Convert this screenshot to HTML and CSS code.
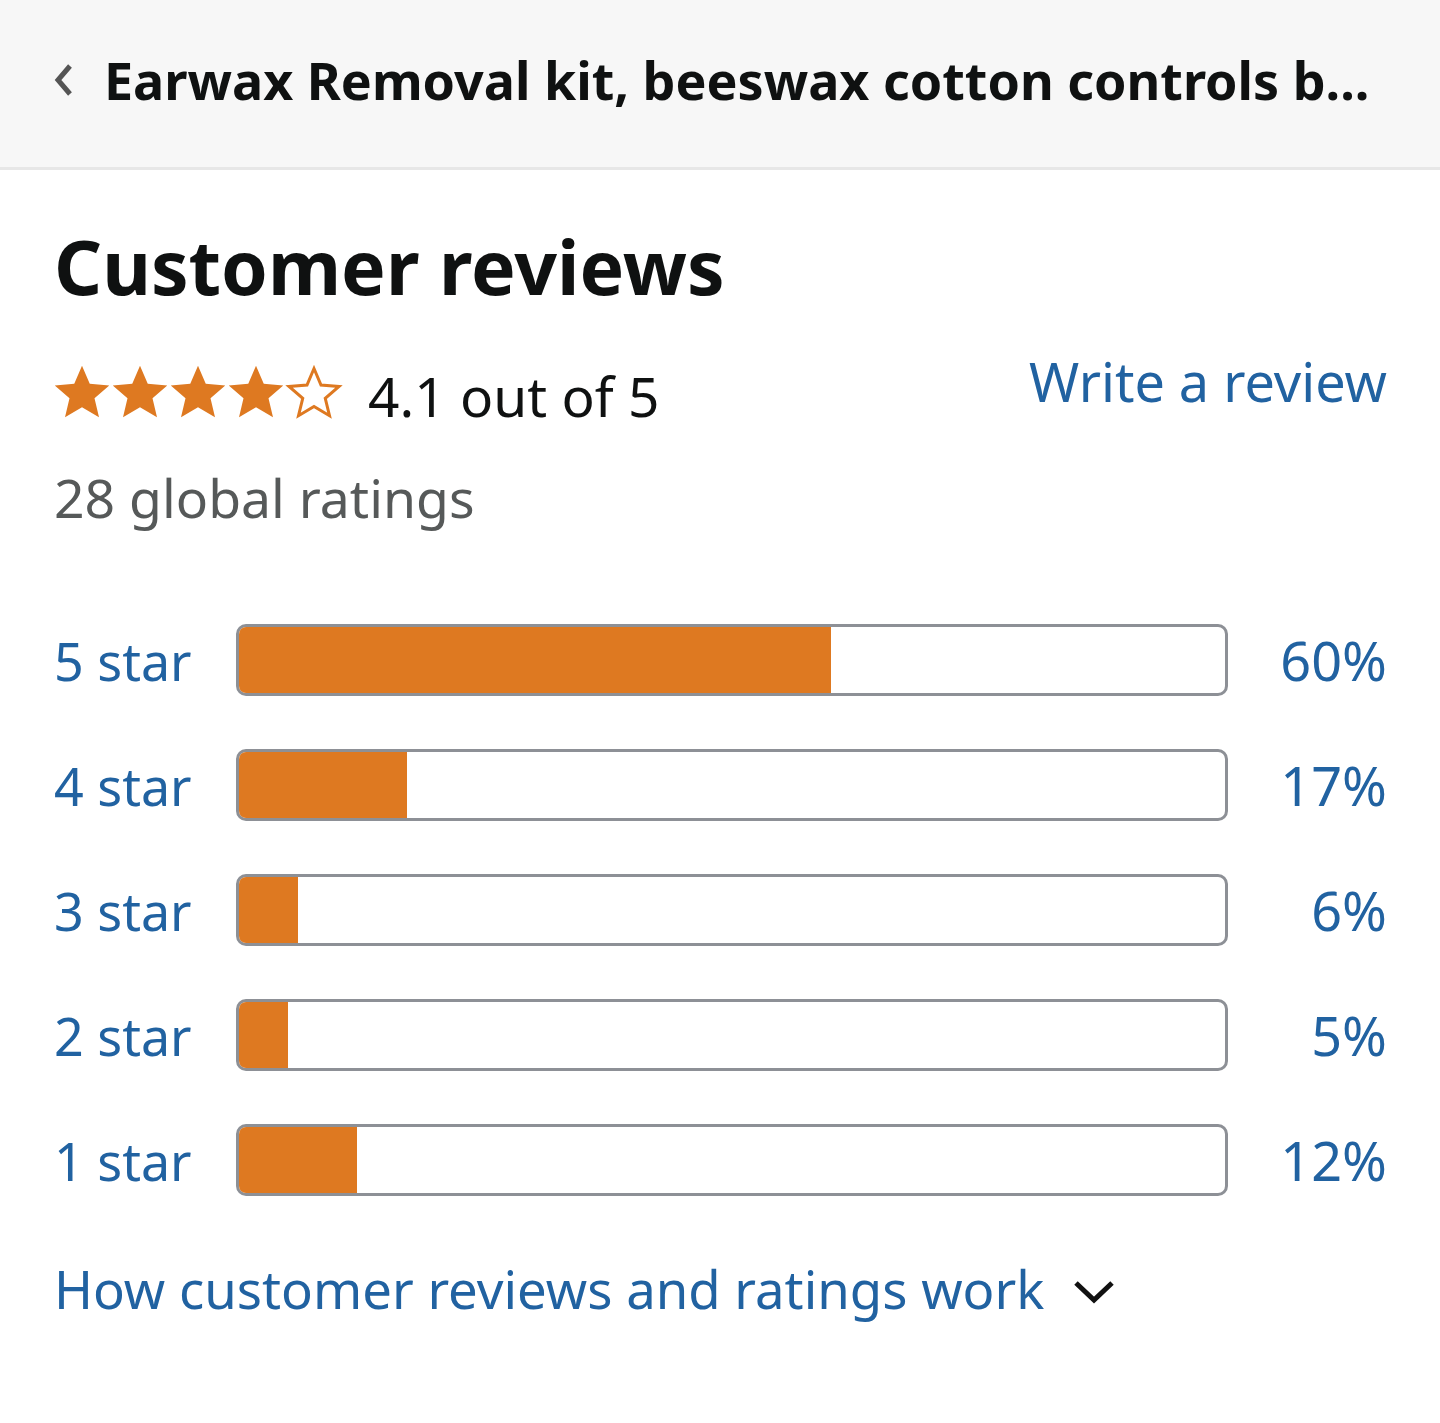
FILE: index.html
```html
<!DOCTYPE html>
<html>
<head>
<meta charset="utf-8">
<link rel="stylesheet" href="styles.css">
</head>
<body>
<header class="topbar">
  <svg class="back" width="24" height="36" viewBox="0 0 24 36"><path d="M18 4 L6 18 L18 32" fill="none" stroke="#555" stroke-width="5"/></svg>
  <h1 class="product">Earwax Removal kit, beeswax cotton controls b...</h1>
</header>
<main class="content">
  <h2 class="title">Customer reviews</h2>
  <div class="summary">
    <div class="rating">
      <div class="stars">
        <svg viewBox="0 0 24 24" class="star"><path d="M12 1.5l3.1 7.2 7.8.7-5.9 5.1 1.8 7.6L12 18.1l-6.8 4 1.8-7.6-5.9-5.1 7.8-.7z" fill="#de7921"/></svg>
        <svg viewBox="0 0 24 24" class="star"><path d="M12 1.5l3.1 7.2 7.8.7-5.9 5.1 1.8 7.6L12 18.1l-6.8 4 1.8-7.6-5.9-5.1 7.8-.7z" fill="#de7921"/></svg>
        <svg viewBox="0 0 24 24" class="star"><path d="M12 1.5l3.1 7.2 7.8.7-5.9 5.1 1.8 7.6L12 18.1l-6.8 4 1.8-7.6-5.9-5.1 7.8-.7z" fill="#de7921"/></svg>
        <svg viewBox="0 0 24 24" class="star"><path d="M12 1.5l3.1 7.2 7.8.7-5.9 5.1 1.8 7.6L12 18.1l-6.8 4 1.8-7.6-5.9-5.1 7.8-.7z" fill="#de7921"/></svg>
        <svg viewBox="0 0 24 24" class="star"><path d="M12 2.6l2.8 6.6 7.2.6-5.5 4.7 1.7 7L12 17.8l-6.2 3.7 1.7-7L2 9.8l7.2-.6z" fill="none" stroke="#de7921" stroke-width="1.2"/></svg>
      </div>
      <span class="score">4.1 out of 5</span>
    </div>
    <a class="write">Write a review</a>
  </div>
  <p class="global">28 global ratings</p>
  <div class="hist">
    <div class="row"><a class="lab">5 star</a><div class="bar"><div class="fill" style="width:60%"></div></div><a class="pct">60%</a></div>
    <div class="row"><a class="lab">4 star</a><div class="bar"><div class="fill" style="width:17%"></div></div><a class="pct">17%</a></div>
    <div class="row"><a class="lab">3 star</a><div class="bar"><div class="fill" style="width:6%"></div></div><a class="pct">6%</a></div>
    <div class="row"><a class="lab">2 star</a><div class="bar"><div class="fill" style="width:5%"></div></div><a class="pct">5%</a></div>
    <div class="row"><a class="lab">1 star</a><div class="bar"><div class="fill" style="width:12%"></div></div><a class="pct">12%</a></div>
  </div>
  <div class="how">
    <a class="howlink">How customer reviews and ratings work</a>
    <svg class="chev" width="44" height="28" viewBox="0 0 44 28"><path d="M4 6 L22 23 L40 6" fill="none" stroke="#111" stroke-width="5"/></svg>
  </div>
</main>
</body>
</html>
```
FILE: styles.css
```css
* { box-sizing: border-box; }
html, body { margin: 0; padding: 0; background: #fff; }
body { font-family: "Noto Sans", "Open Sans", sans-serif; color: #0f1111; width: 1440px; }
.topbar {
  height: 170px;
  background: #f7f7f7;
  border-bottom: 3px solid #e7e7e7;
  display: flex;
  align-items: center;
  padding-left: 52px;
  padding-bottom: 8px;
  gap: 28px;
}
.back { flex: none; margin-top: 0; }
.product {
  margin: 0;
  font-size: 52px;
  font-weight: 700;
  color: #0f1111;
  white-space: nowrap;
}
.content { padding: 0 53px 0 54px; }
.title {
  margin: 0;
  padding-top: 46px;
  font-size: 75px;
  font-weight: 700;
  line-height: 100px;
}
.summary { display: flex; justify-content: space-between; align-items: flex-start; margin-top: 34px; }
.rating { display: flex; align-items: center; gap: 26px; }
.stars { display: flex; gap: 0; margin-left: -2px; }
.star { width: 60px; height: 60px; margin-right: -2px; }
.score { font-size: 55px; padding-top: 8px; }
.write { font-size: 54px; color: #2162a1; margin-top: -6px; }
.global { margin: 28px 0 0; font-size: 53.5px; color: #565959; }
.hist { margin-top: 90px; display: flex; flex-direction: column; gap: 53px; }
.row { display: flex; align-items: center; height: 72px; }
.lab { width: 182px; font-size: 52px; color: #2162a1; }
.bar {
  flex: none;
  width: 992px;
  height: 72px;
  border: 3px solid #8d9096;
  border-radius: 10px;
  overflow: hidden;
  background: #fff;
}
.fill { height: 100%; background: #de7921; }
.pct { flex: 1; text-align: right; font-size: 54px; color: #2162a1; }
.how { display: flex; align-items: center; gap: 28px; margin-top: 57px; }
.howlink { font-size: 52.7px; color: #2162a1; }
.chev { margin-top: 4px; }
```
